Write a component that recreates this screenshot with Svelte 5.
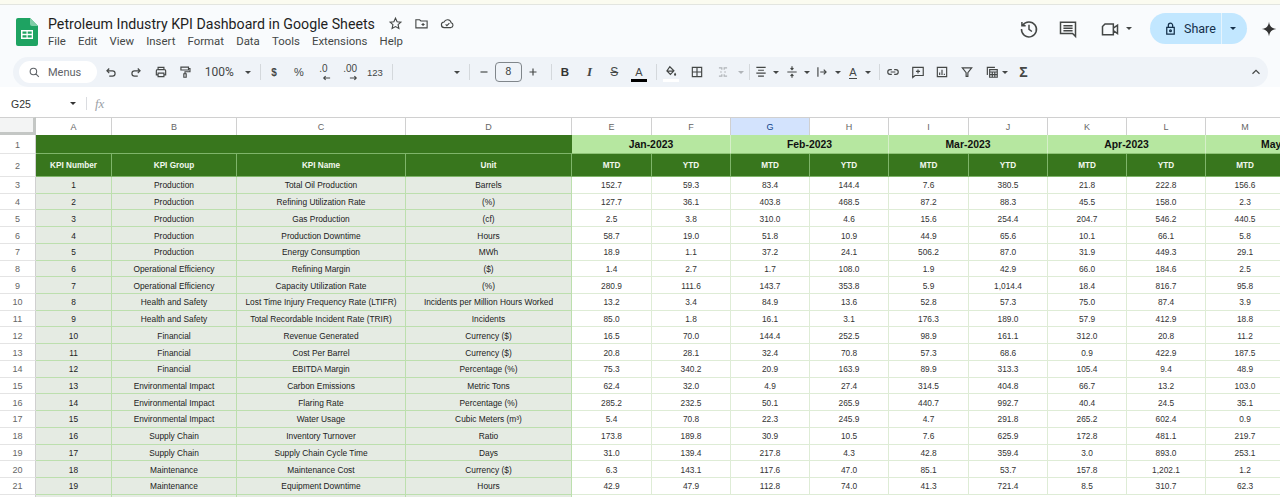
<script lang="ts">
  const columns = ["A", "B", "C", "D", "E", "F", "G", "H", "I", "J", "K", "L", "M", "N"];
  const months = ["Jan-2023", "Feb-2023", "Mar-2023", "Apr-2023", "May-2023"];
  const menus = ["File", "Edit", "View", "Insert", "Format", "Data", "Tools", "Extensions", "Help"];

  const kpis = [
    ["Production", "Total Oil Production", "Barrels", "152.7 59.3 83.4 144.4 7.6 380.5 21.8 222.8 156.6"],
    ["Production", "Refining Utilization Rate", "(%)", "127.7 36.1 403.8 468.5 87.2 88.3 45.5 158.0 2.3"],
    ["Production", "Gas Production", "(cf)", "2.5 3.8 310.0 4.6 15.6 254.4 204.7 546.2 440.5"],
    ["Production", "Production Downtime", "Hours", "58.7 19.0 51.8 10.9 44.9 65.6 10.1 66.1 5.8"],
    ["Production", "Energy Consumption", "MWh", "18.9 1.1 37.2 24.1 506.2 87.0 31.9 449.3 29.1"],
    ["Operational Efficiency", "Refining Margin", "($)", "1.4 2.7 1.7 108.0 1.9 42.9 66.0 184.6 2.5"],
    ["Operational Efficiency", "Capacity Utilization Rate", "(%)", "280.9 111.6 143.7 353.8 5.9 1,014.4 18.4 816.7 95.8"],
    ["Health and Safety", "Lost Time Injury Frequency Rate (LTIFR)", "Incidents per Million Hours Worked", "13.2 3.4 84.9 13.6 52.8 57.3 75.0 87.4 3.9"],
    ["Health and Safety", "Total Recordable Incident Rate (TRIR)", "Incidents", "85.0 1.8 16.1 3.1 176.3 189.0 57.9 412.9 18.8"],
    ["Financial", "Revenue Generated", "Currency ($)", "16.5 70.0 144.4 252.5 98.9 161.1 312.0 20.8 11.2"],
    ["Financial", "Cost Per Barrel", "Currency ($)", "20.8 28.1 32.4 70.8 57.3 68.6 0.9 422.9 187.5"],
    ["Financial", "EBITDA Margin", "Percentage (%)", "75.3 340.2 20.9 163.9 89.9 313.3 105.4 9.4 48.9"],
    ["Environmental Impact", "Carbon Emissions", "Metric Tons", "62.4 32.0 4.9 27.4 314.5 404.8 66.7 13.2 103.0"],
    ["Environmental Impact", "Flaring Rate", "Percentage (%)", "285.2 232.5 50.1 265.9 440.7 992.7 40.4 24.5 35.1"],
    ["Environmental Impact", "Water Usage", "Cubic Meters (m³)", "5.4 70.8 22.3 245.9 4.7 291.8 265.2 602.4 0.9"],
    ["Supply Chain", "Inventory Turnover", "Ratio", "173.8 189.8 30.9 10.5 7.6 625.9 172.8 481.1 219.7"],
    ["Supply Chain", "Supply Chain Cycle Time", "Days", "31.0 139.4 217.8 4.3 42.8 359.4 3.0 893.0 253.1"],
    ["Maintenance", "Maintenance Cost", "Currency ($)", "6.3 143.1 117.6 47.0 85.1 53.7 157.8 1,202.1 1.2"],
    ["Maintenance", "Equipment Downtime", "Hours", "42.9 47.9 112.8 74.0 41.3 721.4 8.5 310.7 62.3"],
  ];
</script>

{#snippet caret()}
  <span class="caret"></span>
{/snippet}

{#snippet tool(d: string)}
  <span class="tool"><svg viewBox="0 0 24 24"><path {d} /></svg></span>
{/snippet}

<div class="page">
  <div class="strip"></div>

  <header class="top">
    <svg class="logo" viewBox="0 0 22 28">
      <path d="M2 0h12l8 8v18a2 2 0 0 1-2 2H2a2 2 0 0 1-2-2V2a2 2 0 0 1 2-2z" fill="#1ea362" />
      <path d="M14 0l8 8h-6a2 2 0 0 1-2-2z" fill="#7fcda6" />
      <path d="M5 12h12v9H5z" fill="#fff" />
      <path d="M6.5 13.5h4v2.2h-4zM11.7 13.5h4v2.2h-4zM6.5 17.2h4v2.3h-4zM11.7 17.2h4v2.3h-4z" fill="#1ea362" />
    </svg>
    <div class="doc">
      <div class="title-row">
        <span class="title">Petroleum Industry KPI Dashboard in Google Sheets</span>
        <svg class="doc-icon star" viewBox="0 0 24 24"><path d="M12 3.5l2.6 5.6 6 .7-4.5 4.1 1.3 6L12 16.9 6.6 19.9l1.3-6-4.5-4.1 6-.7z" /></svg>
        <svg class="doc-icon" viewBox="0 0 24 24"><path d="M3 6h6l2 2h10v11H3zM12 13.5h5M14.5 11v5" /></svg>
        <svg class="doc-icon" viewBox="0 0 24 24"><path d="M7 18.5a4.5 4.5 0 0 1-.5-9 6 6 0 0 1 11.3 1.2A4 4 0 0 1 17.5 18.5zM9 13.5l2 2 4-4" /></svg>
      </div>
      <nav class="menus">
        {#each menus as m}<span>{m}</span>{/each}
      </nav>
    </div>

    <div class="actions">
      <svg class="act history" viewBox="0 0 24 24"><path d="M4.5 7.5A9 9 0 1 1 3 12M3.5 3.5V8H8M12 7v5.5l3.5 2.5" /></svg>
      <svg class="act comment" viewBox="0 0 24 24"><path d="M3 4h18v17l-3.5-3.500H3zM6.500 8h11M6.500 11h11M6.500 14h11" /></svg>
      <svg class="act meet" viewBox="0 0 24 24"><path d="M3 9l3-3h10v13H3zM16 11l5-3.500v10L16 14z" /></svg>
      {@render caret()}
      <div class="share">
        <span class="share-main">
          <svg viewBox="0 0 24 24"><path d="M6 10h12v11H6zM8.500 10V7a3.500 3.500 0 0 1 7 0v3" /><circle cx="12" cy="15.500" r="1.400" /></svg>
          Share
        </span>
        <span class="share-more">{@render caret()}</span>
      </div>
      <svg class="gem" viewBox="0 0 24 24"><path d="M12 1c1 7 4 10 11 11-7 1-10 4-11 11-1-7-4-10-11-11 7-1 10-4 11-11z" /></svg>
    </div>
  </header>

  <div class="toolbar">
    <div class="search">
      <svg viewBox="0 0 24 24"><path d="M10 4a6 6 0 1 0 0 12 6 6 0 0 0 0-12zM14.500 14.500L20 20" /></svg>
      <span>Menus</span>
    </div>
    <div class="group first">
      {@render tool("M9 6L5 10l4 4M5 10h9.500a4.500 4.500 0 0 1 0 9H9")}
      {@render tool("M15 6l4 4-4 4M19 10H9.500a4.500 4.500 0 0 0 0 9H15")}
      {@render tool("M7 8V4h10v4M7 17H4v-7a2 2 0 0 1 2-2h12a2 2 0 0 1 2 2v7h-3M7 14h10v6H7z")}
      {@render tool("M5 3.500h13v5H5zM18 6h2.500v5.500H12V15M10 15h4v6h-4z")}
      <span class="zoom-val">100%</span>
      {@render caret()}
    </div>
    <span class="sep"></span>
    <div class="group">
      <span class="tool txt semi">$</span>
      <span class="tool txt">%</span>
      <span class="tool txt small">.0<svg class="arrow" viewBox="0 0 10 6"><path d="M9 3H2M4 1L2 3l2 2" /></svg></span>
      <span class="tool txt small wide">.00<svg class="arrow" viewBox="0 0 10 6"><path d="M1 3h7M6 1l2 2-2 2" /></svg></span>
      <span class="tool txt num">123</span>
    </div>
    <span class="sep"></span>
    <div class="group fontsel">{@render caret()}</div>
    <span class="sep"></span>
    <div class="group">
      {@render tool("M6 12h12")}
      <span class="size">8</span>
      {@render tool("M6 12h12M12 6v12")}
    </div>
    <span class="sep"></span>
    <div class="group">
      <span class="tool txt bold big">B</span>
      <span class="tool txt ital">I</span>
      <span class="tool txt strike">S</span>
      <span class="tool txt under">A</span>
    </div>
    <span class="sep"></span>
    <div class="group cells">
      <span class="tool fill">
        <svg viewBox="0 0 24 24"><path d="M10 3l7 7-6 6-6-6zM5.500 10.500h11" /><path class="solid" d="M19 13c1.200 1.700 1.800 2.700 1.800 3.500a1.800 1.800 0 0 1-3.600 0c0-.8.600-1.800 1.800-3.500z" /></svg>
      </span>
      {@render tool("M4 4h16v16H4zM12 4v16M4 12h16")}
      <span class="tool off"><svg viewBox="0 0 24 24"><path d="M5 5h5v3M19 5h-5v3M5 19h5v-3M19 19h-5v-3M7 12h3M17 12h-3" /></svg></span>
      <span class="caret off"></span>
    </div>
    <span class="sep"></span>
    <div class="group tight">
      {@render tool("M4 4h16M7 9h10M4 14h16M7 19h10")}
      {@render caret()}
      {@render tool("M4 12h16M12 2v6M9.500 5.500L12 8l2.500-2.500M12 22v-6M9.500 18.500L12 16l2.500 2.500")}
      {@render caret()}
      {@render tool("M5 4v16M9 12h10M15 8l4 4-4 4")}
      {@render caret()}
      <span class="tool txt under-sm">A</span>
      {@render caret()}
    </div>
    <span class="sep"></span>
    <div class="group last">
      {@render tool("M10 8H7a4 4 0 0 0 0 8h3M14 8h3a4 4 0 0 1 0 8h-3M8 12h8")}
      {@render tool("M3 4h18v14H7l-4 3.500zM12 7.500v7M8.500 11h7")}
      {@render tool("M4 4h16v16H4zM8 17v-4M12 17V8M16 17v-2")}
      {@render tool("M4 5h16l-6.500 8v6.500h-3V13z")}
      {@render tool("M8 8h13v13H8zM8 12h13M8 16.500h13M12.500 12v9M16.800 12v9M4 17V4h13")}
      {@render caret()}
      <span class="tool txt sigma">Σ</span>
    </div>
    <span class="spacer"></span>
    <span class="tool chev"><svg viewBox="0 0 24 24"><path d="M6 15l6-6 6 6" /></svg></span>
  </div>

  <div class="formula">
    <span class="ref">G25</span>
    {@render caret()}
    <span class="fsep"></span>
    <span class="fx">fx</span>
  </div>

  <div class="sheet">
    <div class="grid">
      <div class="corner"></div>
      {#each columns as c}
        <div class="col" class:active={c === "G"}>{c}</div>
      {/each}

      <div class="rownum">1</div>
      <div class="dark span4"></div>
      {#each months as m}
        <div class="month span2">{m}</div>
      {/each}

      <div class="rownum">2</div>
      <div class="dark head">KPI Number</div>
      <div class="dark head">KPI Group</div>
      <div class="dark head">KPI Name</div>
      <div class="dark head">Unit</div>
      {#each columns.slice(4) as _, i}
        <div class="dark head">{i % 2 ? "YTD" : "MTD"}</div>
      {/each}

      {#each kpis as k, i}
        <div class="rownum">{i + 3}</div>
        <div class="info">{i + 1}</div>
        <div class="info">{k[0]}</div>
        <div class="info">{k[1]}</div>
        <div class="info">{k[2]}</div>
        {#each k[3].split(" ") as v}
          <div class="val">{v}</div>
        {/each}
        <div class="val"></div>
      {/each}

      <div class="rownum"></div>
      <div class="info"></div>
      <div class="info"></div>
      <div class="info"></div>
      <div class="info"></div>
    </div>
  </div>
</div>

<style>
  :global(body) {
    margin: 0;
    background: #f9fbfd;
  }

  .page {
    height: 100vh;
    display: flex;
    flex-direction: column;
    overflow: hidden;
    font-family: Roboto, "Liberation Sans", sans-serif;
    color: #444746;
  }

  .strip {
    height: 4px;
    flex: none;
    background: #fbfbf0;
    border-bottom: 1px solid #e3e5e0;
  }

  svg {
    fill: none;
    stroke: currentColor;
    stroke-width: 2;
    display: block;
  }

  .top {
    height: 52px;
    flex: none;
    display: flex;
    padding-left: 16px;
  }

  .logo {
    width: 22px;
    height: 28px;
    margin-top: 13px;
    stroke: none;
    flex: none;
  }

  .doc {
    margin-left: 10px;
    padding-top: 9px;
  }

  .title-row {
    display: flex;
    align-items: center;
    height: 19px;
  }

  .title {
    font-size: 14.2px;
    color: #1f1f1f;
    white-space: nowrap;
  }

  .doc-icon {
    width: 15px;
    height: 15px;
    margin-left: 11px;
    stroke-width: 1.8;
  }

  .star {
    margin-left: 13px;
  }

  .menus {
    display: flex;
    gap: 12.15px;
    font-size: 11.4px;
    margin-top: 1px;
    color: #444746;
  }

  .actions {
    margin-left: auto;
    display: flex;
    align-items: center;
    height: 47px;
    color: #444746;
  }

  .act {
    width: 20px;
    height: 20px;
    stroke-width: 1.8;
  }

  .comment {
    margin-left: 19px;
  }

  .meet {
    margin-left: 22px;
  }

  .actions .caret {
    margin-left: 6px;
  }

  .share {
    margin-left: 14px;
    height: 31px;
    width: 97px;
    display: flex;
    border-radius: 16px;
    overflow: hidden;
    background: #c2e7ff;
    color: #14304a;
  }

  .share-main {
    flex: 1;
    display: flex;
    align-items: center;
    gap: 6px;
    padding-left: 13px;
    font-size: 12.5px;
    border-right: 1px solid #e6f4fd;
  }

  .share-main svg {
    width: 15px;
    height: 15px;
  }

  .share-more {
    width: 25px;
    display: flex;
    align-items: center;
    justify-content: center;
  }

  .share-more .caret {
    margin-left: 0;
    color: #14304a;
  }

  .gem {
    width: 16px;
    height: 16px;
    margin: 0 3px 0 14px;
    fill: #333;
    stroke: none;
  }

  .toolbar {
    height: 30px;
    flex: none;
    margin: 0 12px 0 13px;
    border-radius: 16px;
    background: #eff3f8;
    display: flex;
    align-items: center;
    padding-left: 6px;
    font-size: 11px;
    color: #444746;
  }

  .search {
    width: 78px;
    height: 22px;
    flex: none;
    box-sizing: border-box;
    border-radius: 11px;
    background: #fff;
    display: flex;
    align-items: center;
    gap: 7px;
    padding-left: 9px;
    color: #5f6368;
    font-size: 11px;
  }

  .search svg {
    width: 13px;
    height: 13px;
  }

  .group {
    display: flex;
    align-items: center;
  }

  .first {
    margin-left: 2px;
  }

  .tool {
    width: 24.7px;
    height: 20px;
    flex: none;
    display: flex;
    align-items: center;
    justify-content: center;
    position: relative;
  }

  .tool svg {
    width: 14px;
    height: 14px;
  }

  .txt {
    font-size: 11px;
    font-family: "Liberation Sans", sans-serif;
  }

  .bold {
    font-weight: 700;
  }

  .semi {
    font-weight: 700;
    font-size: 10px;
  }

  .big {
    font-size: 11.5px;
    color: #333;
  }

  .small {
    font-size: 10px;
    align-items: flex-start;
    line-height: 14px;
  }

  .wide {
    margin-left: 2px;
  }

  .arrow {
    position: absolute;
    width: 9px !important;
    height: 6px !important;
    right: 5px;
    bottom: 1px;
    stroke-width: 1.3;
  }

  .num {
    font-size: 9.5px;
  }

  .ital {
    font-family: "Liberation Serif", serif;
    font-style: italic;
    font-weight: 700;
    font-size: 13px;
  }

  .strike {
    text-decoration: line-through;
    font-size: 12px;
  }

  .under::after,
  .under-sm::after {
    content: "";
    position: absolute;
    left: 4px;
    right: 4px;
    bottom: 0;
    height: 3px;
    background: #000;
  }

  .under-sm::after {
    height: 1px;
    background: #444746;
    left: 6px;
    right: 6px;
    bottom: 3px;
  }

  .fill::after {
    content: "";
    position: absolute;
    left: 5px;
    right: 5px;
    bottom: 0;
    height: 3px;
    background: #fff;
  }

  .fill .solid {
    fill: currentColor;
    stroke: none;
  }

  .off {
    color: #b0b4b8;
  }

  .sigma {
    font-size: 14px;
    font-weight: 700;
  }

  .zoom-val {
    width: 43px;
    padding-left: 7px;
    box-sizing: border-box;
    font-size: 12px;
  }

  .caret {
    width: 0;
    height: 0;
    flex: none;
    margin: 0 4px;
    border-left: 3.5px solid transparent;
    border-right: 3.5px solid transparent;
    border-top: 3.5px solid currentColor;
  }

  .sep {
    width: 1px;
    height: 16px;
    flex: none;
    margin: 0 1px 0 5px;
    background: #d4d8dc;
  }

  .fontsel {
    width: 70px;
    justify-content: flex-end;
  }

  .size {
    width: 27px;
    height: 20px;
    flex: none;
    margin: 0 -1px;
    box-sizing: border-box;
    border: 1px solid #80868b;
    border-radius: 4px;
    text-align: center;
    line-height: 18px;
    font-size: 11px;
  }

  .cells .tool {
    width: 26px;
  }

  .cells .caret {
    margin: 0 0 0 1.5px;
  }

  .tight .tool {
    width: 20px;
  }

  .tight .caret {
    margin: 0 2.35px;
  }

  .last .caret {
    margin: 0 3px 0 -2px;
  }

  .spacer {
    flex: 1;
  }

  .formula {
    height: 30px;
    flex: none;
    display: flex;
    align-items: center;
    background: #fff;
    font-size: 10.5px;
    color: #333;
    padding-top: 3px;
    box-sizing: border-box;
  }

  .ref {
    width: 66px;
    padding-left: 11px;
    box-sizing: border-box;
    font-family: "Liberation Sans", sans-serif;
  }

  .fsep {
    width: 1px;
    height: 13px;
    margin-left: 6px;
    background: #dadce0;
  }

  .fx {
    margin-left: 8px;
    font-family: "Liberation Serif", serif;
    font-style: italic;
    font-size: 13px;
    color: #9aa0a6;
  }

  .sheet {
    flex: 1;
    min-height: 0;
    overflow: hidden;
    background: #fff;
  }

  .grid {
    display: grid;
    width: max-content;
    grid-template-columns: 36px 76px 125px 169px 166px 80px 79px 79px 79px 80px 79px 79px 79px 79px 79px;
    grid-template-rows: 18px 19px 23px repeat(20, 16.72px);
    font-family: "Liberation Sans", Arial, sans-serif;
    font-size: 8.35px;
    color: #222;
  }

  .grid > div {
    box-sizing: border-box;
    display: flex;
    align-items: center;
    justify-content: center;
    white-space: nowrap;
    overflow: hidden;
  }

  .corner {
    background: #f3f4f4;
    border-top: 1px solid #d0d0d0;
    border-right: 3px solid #c4c7c5;
    border-bottom: 3px solid #c4c7c5;
  }

  .col {
    background: #fff;
    border-top: 1px solid #d0d0d0;
    border-right: 1px solid #d0d0d0;
    color: #666;
    font-size: 9px;
  }

  .col.active {
    background: #d3e3fd;
    color: #0b3f8a;
  }

  .rownum {
    background: #fff;
    padding-top: 1px;
    border-right: 1px solid #d0d0d0;
    border-bottom: 1px solid #e4e4e4;
    color: #666;
    font-size: 9px;
  }

  .dark {
    background: #38761d;
    color: #f2f8ee;
    font-size: 8.2px;
    font-weight: 700;
    border-right: 1px solid #7fb56a;
    border-bottom: 1px solid #7fb56a;
  }

  .span4 {
    grid-column: span 4;
    border-right: 0;
  }

  .span2 {
    grid-column: span 2;
  }

  .month {
    background: #b6e7a0;
    color: #111;
    font-size: 10.4px;
    font-weight: 700;
    border-right: 1px solid #d6efc9;
    border-bottom: 1px solid #8fc477;
  }

  .info {
    background: #e5ebe3;
    padding-top: 1px;
    border-right: 1px solid #bcdfae;
    border-bottom: 1px solid #bcdfae;
  }

  .val {
    background: #fff;
    padding-top: 1px;
    color: #333;
    border-right: 1px solid #deecd6;
    border-bottom: 1px solid #deecd6;
  }
</style>
